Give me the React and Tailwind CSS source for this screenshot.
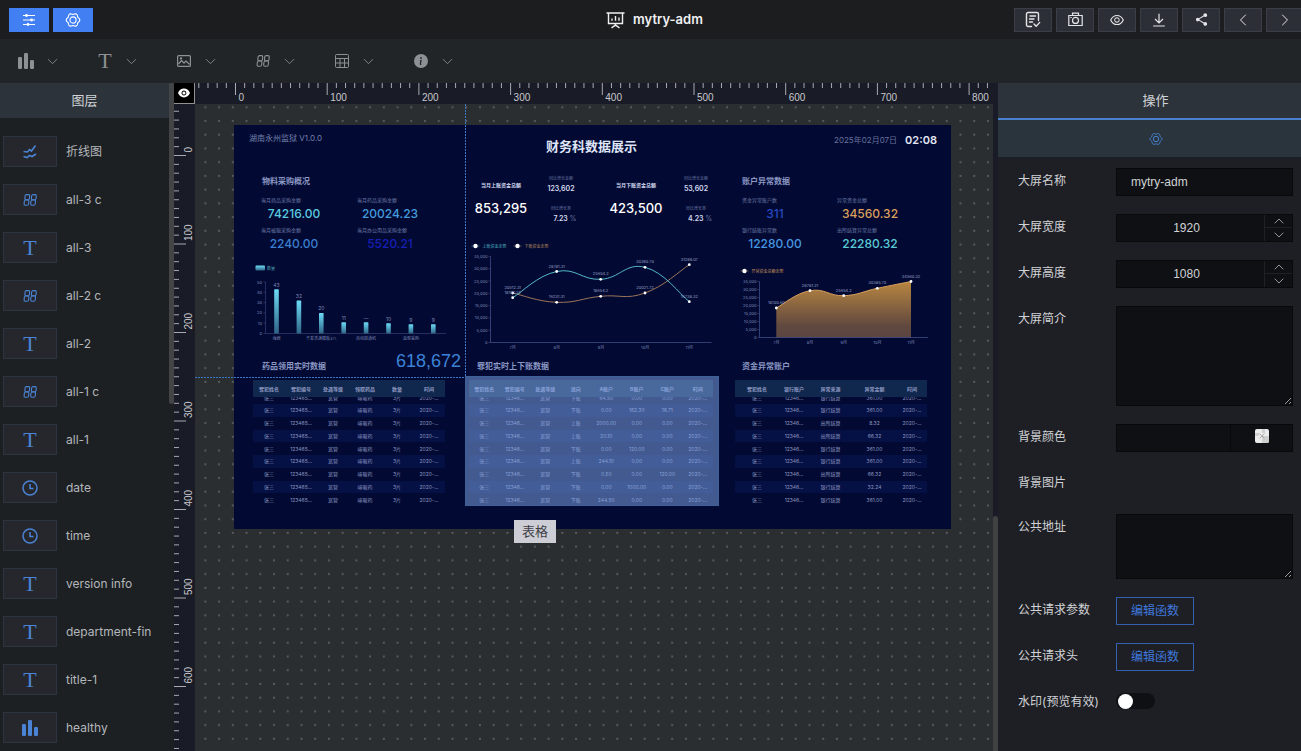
import React, { useState } from 'react';
import { AiOutlineEye, AiFillEye } from 'react-icons/ai';
import { MdShare } from 'react-icons/md';
import { BsInfoCircleFill } from 'react-icons/bs';
import { ChevronDown, ChevronUp, ChevronLeft, ChevronRight } from 'lucide-react';

const range = (from, to) => Array.from({ length: to - from + 1 }, (_, i) => from + i);

const SlidersIcon = () => (
  <svg width="14" height="14" viewBox="0 0 14 14" stroke="currentColor" strokeWidth="1.2" fill="currentColor">
    <path d="M1 2.5h12M1 7h12M1 11.5h12" />
    <circle cx="4.5" cy="2.5" r="1.4" stroke="none" />
    <circle cx="9.5" cy="7" r="1.4" stroke="none" />
    <circle cx="6" cy="11.5" r="1.4" stroke="none" />
  </svg>
);

// six-lobed outline
const gearPoints = range(0, 71)
  .map((i) => {
    const a = (i * Math.PI) / 36;
    const r = 6.2 + 0.6 * Math.cos(6 * a);
    return `${(8 + r * Math.cos(a)).toFixed(2)},${(8 + r * Math.sin(a)).toFixed(2)}`;
  })
  .join(' ');

const GearIcon = ({ size }) => (
  <svg width={size} height={size} viewBox="0 0 16 16" fill="none" stroke="currentColor" strokeWidth="1.1" strokeLinejoin="round">
    <polygon points={gearPoints} />
    <circle cx="8" cy="8" r="3.1" />
  </svg>
);

const BoardIcon = () => (
  <svg width="19" height="18" viewBox="0 0 19 18" fill="none" stroke="currentColor" strokeWidth="1.4">
    <path d="M.5 2h18M2.5 2v10.5h14V2M9.5 12.5v2M5.5 16.8l4-2.6 4 2.6" />
    <path d="M6 9.8V7.5M9.5 9.8V5M13 9.8V6.5" />
  </svg>
);

const DocCheckIcon = () => (
  <svg width="16" height="17" viewBox="0 0 16 17" fill="none" stroke="currentColor" strokeWidth="1.4" strokeLinecap="round" strokeLinejoin="round">
    <path d="M6.5 15.5H3A1.5 1.5 0 0 1 1.5 14V3A1.5 1.5 0 0 1 3 1.5h9A1.5 1.5 0 0 1 13.5 3v6.5M5 5h5.5M4.5 8h4.5M4.5 11h3" />
    <path d="M9 13l2.2 2.2 3.5-3.8" />
  </svg>
);

const CameraIcon = () => (
  <svg width="15" height="15" viewBox="0 0 15 15" fill="none" stroke="currentColor" strokeWidth="1.2">
    <path d="M.8 3.500h13.400v10H.8zM4.500 3.500V1.200h6v2.300M2.200 5.500h1.500" />
    <circle cx="7.5" cy="8.4" r="3" />
  </svg>
);

const DownloadIcon = () => (
  <svg width="14" height="14" viewBox="0 0 14 14" fill="none" stroke="currentColor" strokeWidth="1.2">
    <path d="M7 .8v9M3 6l4 4 4-4M1.200 13h11.600" />
  </svg>
);

const BarsIcon = () => (
  <svg width="16" height="16" viewBox="0 0 16 16" fill="currentColor">
    <rect x="0" y="4" width="4" height="12" rx="1.2" />
    <rect x="6" y="0" width="4" height="16" rx="1.2" />
    <rect x="12" y="7" width="4" height="9" rx="1.2" />
  </svg>
);

const ImageIcon = () => (
  <svg width="14" height="12" viewBox="0 0 14 12" fill="none" stroke="currentColor" strokeWidth="1.2" strokeLinejoin="round">
    <rect x=".6" y=".6" width="12.8" height="10.8" rx="1" />
    <path d="M1.500 9l3-3.500 2.500 2.500 2-2 3.500 3.500" />
    <circle cx="4" cy="3.4" r=".6" />
  </svg>
);

const CounterIcon = () => (
  <svg width="14" height="12" viewBox="0 0 14 12" fill="none" stroke="currentColor" strokeWidth="1.1">
    <g transform="translate(1.3 0) skewX(-6)">
      <rect x="1" y=".6" width="4.6" height="5.2" rx="1.4" />
      <rect x=".8" y="6" width="4.6" height="5.2" rx="1.4" />
      <rect x="7.6" y=".6" width="4.6" height="5.2" rx="1.4" />
      <rect x="7.4" y="6" width="4.6" height="5.2" rx="1.4" />
    </g>
  </svg>
);

const TableIcon = () => (
  <svg width="14" height="14" viewBox="0 0 14 14" fill="none" stroke="currentColor" strokeWidth="1">
    <rect x=".5" y=".5" width="13" height="13" rx="1" />
    <path d="M.5 4.500h13M.5 9h13M5 4.500v9M9.500 4.500v9" />
  </svg>
);

const LineIcon = () => (
  <svg width="14" height="14" viewBox="0 0 14 14" fill="none" stroke="currentColor" strokeWidth="1.6">
    <path d="M.5 6.500l4 .5 2-2.500 2 1.500 4-5.500M.5 11.500l3.500 1 2.500-2 2.500 1L13 9" />
  </svg>
);

const ClockIcon = () => (
  <svg width="16" height="16" viewBox="0 0 16 16" fill="none" stroke="currentColor" strokeWidth="1.5">
    <circle cx="8" cy="8" r="7" />
    <path d="M8 4v4.500h3.500" />
  </svg>
);

const TextIcon = () => <span className="font-['Liberation_Serif',serif] text-[22px] leading-5">T</span>;

const tools = [
  { name: '图表', icon: <BarsIcon /> },
  { name: '文字', icon: <TextIcon /> },
  { name: '图片', icon: <ImageIcon /> },
  { name: '指标', icon: <CounterIcon /> },
  { name: '表格', icon: <TableIcon /> },
  { name: '信息', icon: <BsInfoCircleFill size={14} /> },
];

const actions = [
  { name: '保存', icon: <DocCheckIcon /> },
  { name: '截图', icon: <CameraIcon /> },
  { name: '预览', icon: <AiOutlineEye size={16} /> },
  { name: '导出', icon: <DownloadIcon /> },
  { name: '分享', icon: <MdShare size={15} /> },
  { name: '撤销', icon: <ChevronLeft size={20} strokeWidth={1.2} /> },
  { name: '重做', icon: <ChevronRight size={20} strokeWidth={1.2} /> },
];

const layers = [
  { name: '折线图', icon: <LineIcon /> },
  { name: 'all-3 c', icon: <CounterIcon /> },
  { name: 'all-3', icon: <TextIcon /> },
  { name: 'all-2 c', icon: <CounterIcon /> },
  { name: 'all-2', icon: <TextIcon /> },
  { name: 'all-1 c', icon: <CounterIcon /> },
  { name: 'all-1', icon: <TextIcon /> },
  { name: 'date', icon: <ClockIcon /> },
  { name: 'time', icon: <ClockIcon /> },
  { name: 'version info', icon: <TextIcon /> },
  { name: 'department-fin', icon: <TextIcon /> },
  { name: 'title-1', icon: <TextIcon /> },
  { name: 'healthy', icon: <BarsIcon /> },
];

const months = ['7月', '8月', '9月', '10月', '11月'];

// catmull-rom style smoothing
const smooth = (pts) =>
  pts.reduce((d, [x, y], i) => {
    if (i === 0) return `M${x} ${y}`;
    const [x0, y0] = pts[i - 1];
    const before = pts[i - 2] || pts[i - 1];
    const after = pts[i + 1] || pts[i];
    return `${d}C${x0 + (x - before[0]) * 0.22} ${y0 + (y - before[1]) * 0.22} ${x - (after[0] - x0) * 0.22} ${y - (after[1] - y0) * 0.22} ${x} ${y}`;
  }, '');

const HRuler = () => (
  <svg className="h-[21px] w-full" fontSize="10" fontFamily="Liberation Sans, sans-serif" fill="#c8c8cc">
    {range(-4, 83).map((n) => {
      const x = 40.5 + n * 9.17;
      const major = n % 10 === 0;
      return (
        <g key={n}>
          <path d={`M${x} 0v${major ? 12 : 5}`} stroke="#a9abb0" />
          {major && <text x={x + 3} y="18">{n * 10}</text>}
        </g>
      );
    })}
  </svg>
);

const VRuler = () => (
  <svg className="w-[21px] flex-1" fontSize="10" fontFamily="Liberation Sans, sans-serif" fill="#c8c8cc">
    {range(-5, 68).map((n) => {
      const y = 51.5 + n * 8.85;
      const major = n % 10 === 0;
      return (
        <g key={n}>
          <path d={`M0 ${y}h${major ? 12 : 5}`} stroke="#a9abb0" />
          {major && <text transform={`translate(18 ${y - 3}) rotate(-90)`}>{n * 10}</text>}
        </g>
      );
    })}
  </svg>
);

const BarChart = () => {
  const data = [
    ['43', 43, '海绵'], ['32', 32], ['20', 20, '干发洗浴模板3八'], ['11', 11],
    ['—', 11, '自动烘道机'], ['10', 10], ['9', 9, '血型采购'], ['9', 9],
  ];
  return (
    <svg className="absolute left-[16px] top-[136px]" width="200" height="84" fontSize="4" fill="#7f88b8">
      <defs>
        <linearGradient id="bar" x1="0" y1="0" x2="0" y2="1">
          <stop offset="0" stopColor="#6cdcf8" />
          <stop offset="1" stopColor="#2f6486" />
        </linearGradient>
      </defs>
      <rect x="5.5" y="4.5" width="9.5" height="5" rx="1" fill="url(#bar)" />
      <text x="17" y="9" fill="#58a9bd">数量</text>
      <path d="M15.500 21v51.500H196" stroke="#3d4680" strokeWidth=".6" fill="none" />
      {range(0, 5).map((n) => (
        <g key={n}>
          <path d={`M13.5 ${72.5 - n * 10.3}h2`} stroke="#3d4680" strokeWidth=".6" />
          <text x="12" y={74 - n * 10.3} textAnchor="end">{n * 10}</text>
        </g>
      ))}
      {data.map(([label, v, name], i) => {
        const x = 26.5 + i * 22.4;
        const h = v * 1.03;
        return (
          <g key={i} textAnchor="middle">
            <rect x={x - 2.3} y={72.5 - h} width="4.6" height={h} rx=".6" fill="url(#bar)" />
            <text x={x} y={70 - h} fontSize="5">{label}</text>
            {name && <text x={x} y="79">{name}</text>}
          </g>
        );
      })}
    </svg>
  );
};

const Axis = ({ x, bottom, right, step }) => (
  <g>
    <path d={`M${x} ${bottom - step * 7}V${bottom}H${right}`} stroke="#48538f" strokeWidth=".7" fill="none" />
    {range(0, 7).map((n) => (
      <g key={n}>
        <path d={`M${x - 2} ${bottom - n * step}h2`} stroke="#48538f" strokeWidth=".6" />
        <text x={x - 3} y={bottom + 1.5 - n * step} textAnchor="end">{(n * 5000).toLocaleString('en-US')}</text>
      </g>
    ))}
    {months.map((m, i) => (
      <text key={m} x={x + ((right - x) / 5) * (i + 0.5)} y={bottom + 6} textAnchor="middle">{m}</text>
    ))}
  </g>
);

const Series = ({ pts, labels, color }) => (
  <g textAnchor="middle">
    <path d={smooth(pts)} stroke={color} strokeWidth="1" fill="none" />
    {pts.map(([x, y], i) => (
      <g key={x}>
        <circle cx={x} cy={y} r="1.4" fill="#fff" />
        <text x={x} y={y - 4} fill="#98a0c8">{labels[i]}</text>
      </g>
    ))}
  </g>
);

const LegendItem = ({ x, y, color, children }) => (
  <g>
    <path d={`M${x - 4} ${y}h8`} stroke={color} strokeWidth=".5" />
    <circle cx={x} cy={y} r="2.2" fill="#fff" />
    <text x={x + 7} y={y + 1.7} fill={color}>{children}</text>
  </g>
);

const LineChart = () => (
  <svg className="absolute left-[236px] top-[115px]" width="250" height="112" fontSize="4" fill="#7f88b8">
    <LegendItem x={5.5} y={6} color="#4fb3c4">上账资金走势</LegendItem>
    <LegendItem x={47.5} y={6} color="#b98a5e">下账资金走势</LegendItem>
    <Axis x={20.5} bottom={102.5} right={241.5} step={12.3} />
    <Series
      color="#9a7459"
      pts={[[42.7, 53], [86.7, 62.3], [130.7, 56.3], [175, 53], [219.3, 24.7]]}
      labels={['20512.31', '16231.31', '18654.2', '20021.72', '31289.07']}
    />
    <Series
      color="#55b7c8"
      pts={[[42.7, 57.7], [86.7, 31.5], [130.7, 39.3], [175, 27.3], [219.3, 61.7]]}
      labels={['18100.32', '28781.31', '25654.2', '30390.70', '16738.32']}
    />
  </svg>
);

const AreaChart = () => {
  const pts = [[36.3, 43], [70, 25.7], [103.7, 30.7], [137.3, 23.3], [171, 16.5]];
  return (
    <svg className="absolute left-[506px] top-[140px]" width="200" height="84" fontSize="4" fill="#7f88b8">
      <defs>
        <linearGradient id="area" x1="0" y1="0" x2="0" y2="1">
          <stop offset="0" stopColor="#b98641" />
          <stop offset=".8" stopColor="#60483f" />
          <stop offset="1" stopColor="#5c4642" />
        </linearGradient>
      </defs>
      <LegendItem x={4.5} y={6} color="#c8935a">异常资金总额走势</LegendItem>
      <path d={`${smooth(pts)}V72.5H36.3Z`} fill="url(#area)" />
      <Axis x={19.5} bottom={72.5} right={188} step={8} />
      <Series color="#d9a05b" pts={pts} labels={['18100.60', '28781.31', '25654.2', '30385.70', '34560.32']} />
    </svg>
  );
};

const Metric = ({ className, label, value, color }) => (
  <div className={`absolute w-[66px] ${className}`}>
    <p className="whitespace-nowrap text-[5px] leading-[10px] text-[#6d78a6]">{label}</p>
    <p className={`text-center text-[12px] font-medium leading-[18px] ${color}`}>{value}</p>
  </div>
);

const Kpi = ({ className, label, value, growth, rate }) => (
  <div className={`absolute flex items-center gap-4 whitespace-nowrap text-center text-[#d5daf0] ${className}`}>
    <div className="w-14">
      <p className="text-[5px] font-bold leading-[10px]">{label}</p>
      <p className="mt-2 text-[13px] font-medium leading-5 text-white">{value}</p>
    </div>
    <div className="w-8">
      <p className="text-[4px] leading-[10px] text-[#66709f]">同比增长金额</p>
      <p className="text-[7px] font-semibold leading-[10px]">{growth}</p>
      <p className="mt-[10px] text-[4px] leading-[10px] text-[#66709f]">同比增长率</p>
      <p className="pl-2 text-[7px] font-semibold leading-[10px]">
        {rate} <span className="font-normal text-[#66709f]">%</span>
      </p>
    </div>
  </div>
);

const DataTable = ({ className, head, widths, rows }) => (
  <table className={`absolute h-[126px] table-fixed text-center text-[5px] text-[#8d97c0] ${className}`}>
    <thead>
      <tr className="h-[17px] bg-[#10284e]">
        {head.map((h, i) => (
          <th key={h} className={`p-0 leading-[12px] ${widths ? widths[i] : ''}`}>{h}</th>
        ))}
      </tr>
    </thead>
    <tbody>
      {rows.map((row, r) => (
        <tr key={r} className={r === 0 ? 'h-[7px]' : r % 2 ? 'bg-[#051044]' : ''}>
          {row.map((cell, c) => (
            <td key={c} className="p-0">
              {r === 0 ? (
                <div className="flex h-[7px] items-end justify-center overflow-hidden leading-[12px]">{cell}</div>
              ) : (
                <div className="leading-[12px]">{cell}</div>
              )}
            </td>
          ))}
        </tr>
      ))}
    </tbody>
  </table>
);

const drugRows = range(0, 8).map(() => ['张三', '123465...', '宽管', '咳嗽药', '3片', '2020-...']);

const accountRows = [
  ['下账', '64.50', '0.00', '0.00'],
  ['下账', '0.00', '162.30', '16.71'],
  ['上账', '2000.00', '0.00', '0.00'],
  ['上账', '20.10', '0.00', '0.00'],
  ['下账', '0.00', '120.00', '0.00'],
  ['上账', '244.10', '0.00', '0.00'],
  ['下账', '0.50', '0.00', '120.00'],
  ['下账', '0.00', '1000.00', '0.00'],
  ['下账', '244.50', '0.00', '0.00'],
].map((r) => ['张三', '12346...', '宽管', ...r, '2020-...']);

const abnormalRows = [
  ['银行结算', '361.00'],
  ['银行结算', '361.00'],
  ['出所结算', '8.32'],
  ['出所结算', '66.32'],
  ['银行结算', '361.00'],
  ['银行结算', '361.00'],
  ['出所结算', '66.32'],
  ['银行结算', '32.24'],
  ['银行结算', '361.00'],
].map((r) => ['张三', '12346...', ...r, '2020-...']);

const sectionTitle = 'absolute whitespace-nowrap text-[8px] font-bold leading-[10px] text-[#8c98c4]';

const Board = () => (
  <div className="absolute left-[39px] top-[21px] h-[404px] w-[717px] bg-[#020a33]">
    <p className="absolute left-[15px] top-[8px] whitespace-nowrap text-[8px] leading-[10px] text-[#7480ab]">湖南永州监狱 V1.0.0</p>
    <h2 className="absolute left-[312px] top-[11px] whitespace-nowrap text-[13px] font-bold leading-5 text-[#dfe4f6]">财务科数据展示</h2>
    <div className="absolute right-[14px] top-[5px] flex items-center gap-2 whitespace-nowrap">
      <span className="text-[8px] leading-5 text-[#66719d]">2025年02月07日</span>
      <span className="text-[11px] font-semibold leading-5 text-[#e3e6f4]">02:08</span>
    </div>

    <h3 className={`left-[28px] top-[51px] ${sectionTitle}`}>物料采购概况</h3>
    <Metric className="left-[27px] top-[70px]" label="当月商品采购金额" value="74216.00" color="text-[#5ccbe0]" />
    <Metric className="left-[123px] top-[70px]" label="当月药品采购金额" value="20024.23" color="text-[#459bdc]" />
    <Metric className="left-[27px] top-[100px]" label="当月被服采购金额" value="2240.00" color="text-[#3a7fd0]" />
    <Metric className="left-[123px] top-[100px]" label="当月办公用品采购金额" value="5520.21" color="text-[#171fb4]" />
    <BarChart />

    <Kpi className="left-[239px] top-[49px]" label="当月上账资金总额" value="853,295" growth="123,602" rate="7.23" />
    <Kpi className="left-[374px] top-[49px]" label="当月下账资金总额" value="423,500" growth="53,602" rate="4.23" />
    <LineChart />

    <h3 className={`left-[508px] top-[51px] ${sectionTitle}`}>账户异常数据</h3>
    <Metric className="left-[508px] top-[70px]" label="资金异常账户数" value="311" color="text-[#2749c4]" />
    <Metric className="left-[603px] top-[70px]" label="异常资金总额" value="34560.32" color="text-[#dc9f5c]" />
    <Metric className="left-[508px] top-[100px]" label="银行结账异常数" value="12280.00" color="text-[#4697e0]" />
    <Metric className="left-[603px] top-[100px]" label="出所结算异常总额" value="22280.32" color="text-[#5bcbd6]" />
    <AreaChart />

    <h3 className={`left-[28px] top-[236px] ${sectionTitle}`}>药品领用实时数据</h3>
    <h3 className={`left-[243px] top-[236px] ${sectionTitle}`}>罪犯实时上下账数据</h3>
    <h3 className={`left-[508px] top-[236px] ${sectionTitle}`}>资金异常账户</h3>

    <DataTable
      className="left-[19px] top-[255px] w-[192px]"
      head={['罪犯姓名', '罪犯编号', '处遇等级', '领取药品', '数量', '时间']}
      rows={drugRows}
    />
    <DataTable
      className="left-[235px] top-[255px] w-[244px]"
      head={['罪犯姓名', '罪犯编号', '处遇等级', '流向', 'A账户', 'B账户', 'C账户', '时间']}
      rows={accountRows}
    />
    <DataTable
      className="left-[501px] top-[255px] w-[192px]"
      head={['罪犯姓名', '银行账户', '异常来源', '异常金额', '时间']}
      widths={['w-[44px]', 'w-[30px]', 'w-[43px]', 'w-[45px]', 'w-[30px]']}
      rows={abnormalRows}
    />

    {/* selected widget */}
    <div className="absolute left-[231px] top-[251px] h-[130px] w-[254px] border border-[#3f6199] bg-[#82aaec]/50" />
    <span className="absolute left-[162px] top-[226px] font-['Liberation_Sans',sans-serif] text-[18px] leading-5 text-[#3c82d6]">618,672</span>
    <div className="absolute left-[280px] top-[395px] bg-[#cdcdd5] px-2 text-[13px] leading-[23px] text-[#3e3f45]">表格</div>
  </div>
);

const Row = ({ label, id, children }) => (
  <div className="flex items-start">
    <label htmlFor={id} className="w-[98px] shrink-0 whitespace-nowrap text-[12px] leading-[26px]">{label}</label>
    <div className="min-h-[26px] min-w-0 flex-1">{children}</div>
  </div>
);

const box = 'block w-full border border-[#08090b] bg-[#0f1013] outline-none';

const NumberField = ({ id, value, onChange }) => (
  <div className={`${box} flex h-7`}>
    <input
      id={id}
      value={value}
      onChange={(e) => onChange(Number(e.target.value) || 0)}
      className="min-w-0 flex-1 pr-2 text-center font-['Liberation_Sans',sans-serif] text-[12px] outline-none"
    />
    <div className="flex w-7 flex-col border-l border-[#1f2023] text-[#94969b]">
      <button aria-label="增加" onClick={() => onChange(value + 1)} className="flex h-[13px] items-center justify-center border-b border-[#1f2023]">
        <ChevronUp size={16} strokeWidth={1.5} />
      </button>
      <button aria-label="减少" onClick={() => onChange(value - 1)} className="flex h-[13px] items-center justify-center">
        <ChevronDown size={16} strokeWidth={1.5} />
      </button>
    </div>
  </div>
);

const SettingsPanel = () => {
  const [name, setName] = useState('mytry-adm');
  const [width, setWidth] = useState(1920);
  const [height, setHeight] = useState(1080);
  const outline = 'block h-7 border border-[#345fae] px-[14px] text-[12px] text-[#3f78dc]';

  return (
    <aside className="flex w-[303px] shrink-0 flex-col bg-[#1e1f24] text-[#d0d2d6]">
      <h2 className="h-[35px] bg-[#2d333b] pl-3 text-center text-[13px] leading-[35px]">操作</h2>
      <button aria-label="设置" className="flex h-[39px] items-center justify-center border-t-2 border-[#4a80d0] bg-[#29343c] pl-3 text-[#4a86d8]">
        <GearIcon size={14} />
      </button>
      <div className="flex flex-col gap-[18px] pb-4 pl-5 pr-2 pt-[11px]">
        <Row label="大屏名称" id="name">
          <input
            id="name"
            value={name}
            onChange={(e) => setName(e.target.value)}
            className={`${box} h-7 px-[14px] font-['Liberation_Sans',sans-serif] text-[12px]`}
          />
        </Row>
        <Row label="大屏宽度" id="width">
          <NumberField id="width" value={width} onChange={setWidth} />
        </Row>
        <Row label="大屏高度" id="height">
          <NumberField id="height" value={height} onChange={setHeight} />
        </Row>
        <Row label="大屏简介" id="intro">
          <textarea id="intro" className={`${box} h-[100px] scheme-dark`} />
        </Row>
        <Row label="背景颜色" id="bg-color">
          <div className={`${box} flex h-7`}>
            <input id="bg-color" className="min-w-0 flex-1 border-r border-[#08090b] outline-none" />
            <button aria-label="选择颜色" className="flex w-[61px] justify-center pt-1">
              <svg width="14" height="14" viewBox="0 0 14 14">
                <rect width="14" height="14" rx="2" fill="#ececec" />
                <path d="M7 7h7v5a2 2 0 0 1-2 2H7zM0 4h4v3H0zM7 0h3v4H7z" fill="#cfcfcf" />
                <path d="M4.500 4.500l5 5M9.500 4.500l-5 5" stroke="#9a9a9a" strokeWidth=".8" />
              </svg>
            </button>
          </div>
        </Row>
        <Row label="背景图片" />
        <Row label="公共地址" id="address">
          <textarea id="address" className={`${box} h-[65px] scheme-dark`} />
        </Row>
        <Row label="公共请求参数" id="params">
          <button id="params" className={outline}>编辑函数</button>
        </Row>
        <Row label="公共请求头" id="headers">
          <button id="headers" className={outline}>编辑函数</button>
        </Row>
        <Row label="水印(预览有效)" id="watermark">
          <input
            id="watermark"
            type="checkbox"
            role="switch"
            className="mt-1 flex h-4 w-[39px] appearance-none items-center rounded-full bg-[#0f1013] px-[2px] before:size-[15px] before:rounded-full before:bg-white checked:justify-end checked:bg-[#3f78dc]"
          />
        </Row>
      </div>
    </aside>
  );
};

const App = () => (
  <div className="flex h-screen flex-col overflow-hidden bg-[#1d2023] font-['Inter','Noto_Sans_CJK_SC',sans-serif] text-[12px]">
    <header className="grid h-[39px] shrink-0 grid-cols-[1fr_auto_1fr] items-center bg-[#1c1d1f]">
      <div className="flex gap-1 pl-[9px]">
        <button aria-label="图层" className="flex h-6 w-10 items-center justify-center bg-[#417ff2] text-white">
          <SlidersIcon />
        </button>
        <button aria-label="设置" className="flex h-6 w-10 items-center justify-center bg-[#417ff2] text-white">
          <GearIcon size={16} />
        </button>
      </div>
      <h1 className="flex items-center gap-2 pl-2 text-[13px] font-semibold text-[#f0f0f2]">
        <BoardIcon />
        mytry-adm
      </h1>
      <div className="-mr-[3px] flex justify-end gap-1">
        {actions.map((a) => (
          <button key={a.name} aria-label={a.name} className="flex h-6 w-[38px] items-center justify-center border border-[#3b3e46] bg-[#2c2f36] text-[#e4e5e8]">
            {a.icon}
          </button>
        ))}
      </div>
    </header>

    <nav className="flex h-11 shrink-0 items-center bg-[#212527] pl-4 text-[#8d9094]">
      {tools.map((t) => (
        <button key={t.name} aria-label={t.name} className="flex w-[79px] items-center gap-2">
          <span className="flex w-5 justify-center">{t.icon}</span>
          <ChevronDown size={17} strokeWidth={1.2} />
        </button>
      ))}
    </nav>

    <main className="flex min-h-0 flex-1">
      <aside className="flex w-[174px] shrink-0 items-start">
        <div className="min-w-0 flex-1">
          <h2 className="h-[35px] bg-[#2d333b] text-center text-[13px] leading-[35px] text-[#d0d2d6]">图层</h2>
          <ul className="flex flex-col gap-[17px] pl-[3px] pt-[18px]">
            {layers.map((l) => (
              <li key={l.name} className="flex items-center gap-[9px] text-[#b4b7bb]">
                <span className="flex h-[31px] w-[54px] shrink-0 items-center justify-center border border-[#2c343f] bg-[#26272c] text-[#4b83d4]">
                  {l.icon}
                </span>
                {l.name}
              </li>
            ))}
          </ul>
        </div>
        <div className="h-[321px] w-[5px] rounded-b bg-[#434446]" />
      </aside>

      <section className="flex min-w-0 flex-1 bg-[#191b26]">
        <div className="flex w-[21px] shrink-0 flex-col">
          <button aria-label="显示参考线" className="flex h-[21px] shrink-0 items-center justify-center border-b border-r border-[#8f9195] bg-black text-white">
            <AiFillEye size={14} />
          </button>
          <VRuler />
        </div>
        <div className="flex min-w-0 flex-1 flex-col">
          <HRuler />
          <div className="relative min-h-0 flex-1 overflow-hidden bg-[#2b2e31]">
            <svg className="size-full">
              <defs>
                <pattern id="dots" x="3.5" y="-3.5" width="13.73" height="13.73" patternUnits="userSpaceOnUse">
                  <circle cx="6.86" cy="6.86" r="1.1" fill="#5a5d60" />
                </pattern>
              </defs>
              <rect width="100%" height="100%" fill="url(#dots)" />
            </svg>
            <Board />
            {/* guide lines */}
            <svg className="pointer-events-none absolute inset-0 size-full" stroke="#3b78c4" strokeDasharray="2 1">
              <path d="M270.500 0V273" />
              <path d="M0 273.500H270" />
            </svg>
          </div>
        </div>
        <div className="flex w-[5px] shrink-0 flex-col justify-end">
          <div className="h-[235px] rounded-t bg-[#3f4143]" />
        </div>
      </section>

      <SettingsPanel />
    </main>
  </div>
);

export default App;
